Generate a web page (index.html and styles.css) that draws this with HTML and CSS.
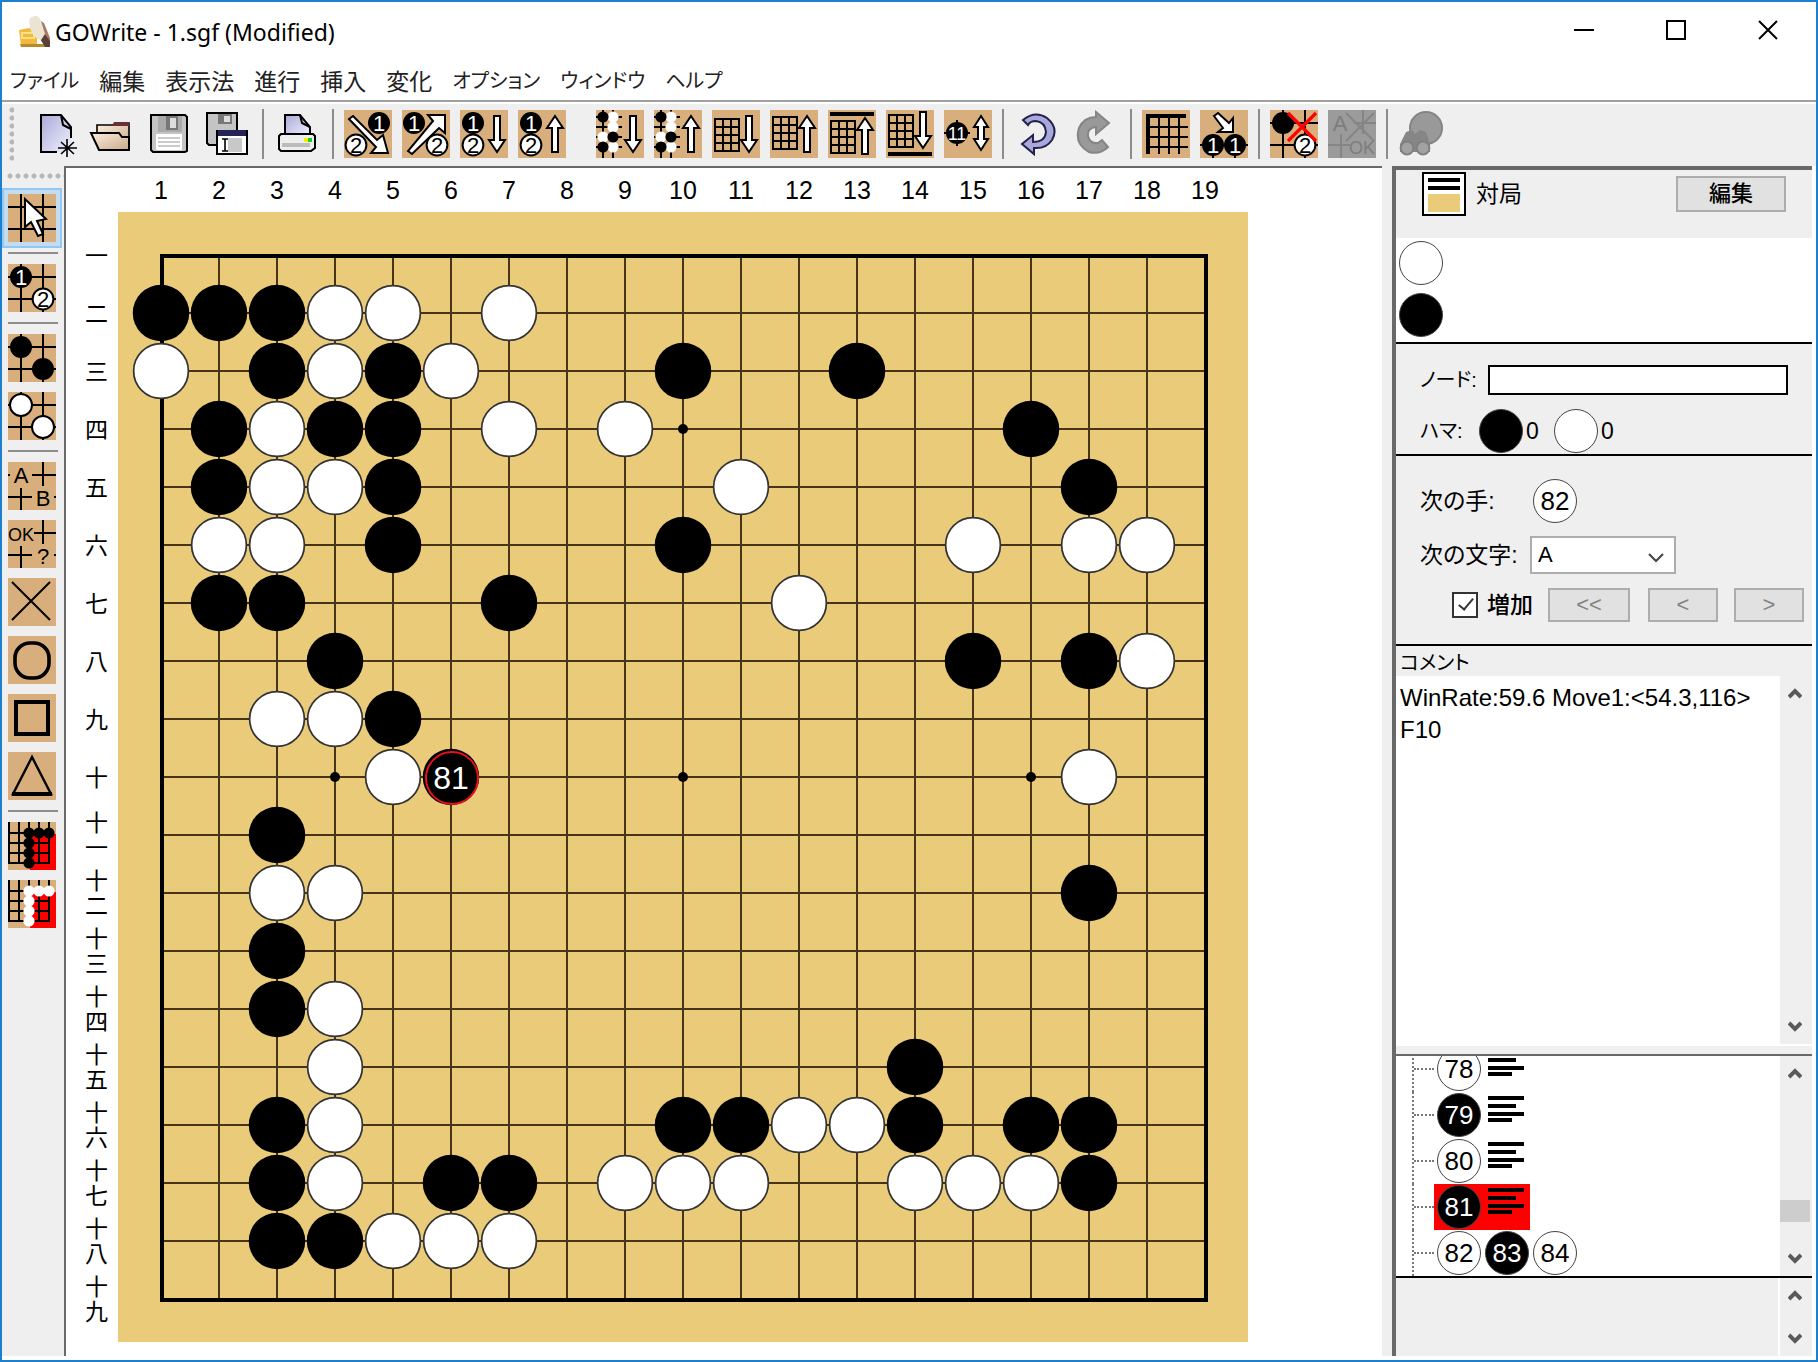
FILE: index.html
```html
<!DOCTYPE html>
<html lang="ja">
<head>
<meta charset="utf-8">
<title>GOWrite - 1.sgf (Modified)</title>
<link rel="stylesheet" href="styles.css">
</head>
<body>
<svg class="defs" width="0" height="0" aria-hidden="true">
  <defs>
    <linearGradient id="paper" x1="0" y1="0" x2="1" y2="1"><stop offset="0" stop-color="#a9a9d8"/><stop offset="1" stop-color="#f2f2ff"/></linearGradient>
    <linearGradient id="folder" x1="0" y1="0" x2="1" y2="1"><stop offset="0" stop-color="#fdeedd"/><stop offset="1" stop-color="#c9a98c"/></linearGradient>
    <g id="cross"><path d="M0 6.5h24M0 17.5h24M6.5 0v24M17.5 0v24" stroke="#000" fill="none"/></g>
    <g id="down"><path d="M17 3h3v12h2.500l-4 6-4-6h2.500z" fill="#fff" stroke="#000"/></g>
    <g id="up"><path d="M17 21h3V9h2.500l-4-6-4 6h2.500z" fill="#fff" stroke="#000"/></g>
    <g id="grid"><path d="M.5 .5h12v16h-12zM4.500 .5v16M8.500 .5v16M.5 4.500h12M.5 8.500h12M.5 12.500h12" fill="none" stroke="#000"/></g>
    <g id="one"><circle r="5.500"/><text y="4" fill="#fff" class="glyph">1</text></g>
    <g id="two"><circle r="5.200" fill="#fff" stroke="#000"/><text y="4" class="glyph">2</text></g>
    <g id="pattern"><path d="M3.500 0v24M8.500 0v24M0 3.500h13M0 8.500h13M0 13.500h13M0 18.500h13" stroke="#000"/><g fill="#fff"><circle cx="8.500" cy="3.500" r="2.800"/><circle cx="8.500" cy="8.500" r="2.800"/><circle cx="3.500" cy="13.500" r="2.800"/><circle cx="8.500" cy="18.500" r="2.800"/></g><circle cx="3.500" cy="3.500" r="2.800"/><circle cx="8.500" cy="13.500" r="2.800"/><circle cx="3.500" cy="18.500" r="2.800"/></g>
    <circle id="b" r=".487"/>
    <circle id="w" r=".472" fill="#fff" stroke="#333" stroke-width=".03"/>
    <g id="lines"><path d="M0 2h36M0 10h28M0 18h36M0 24h24" stroke="#000" stroke-width="4"/></g>
  </defs>
</svg>

<div class="window">
  <header class="titlebar">
    <svg class="logo" viewBox="0 0 32 32"><path d="M1 14l10-2 8 3v15H3z" fill="#f3b93c"/><path d="M4 17h12v5H4z" fill="none" stroke="#fbe08a" stroke-width="2"/><path d="M2 28h24l2 3H3z" fill="#b98a2c"/><path d="M21 4l5 3 6 15v9h-4L17 17l6-2z" fill="#a87a66"/><path d="M26 17l6 8v6h-5l-4-7z" fill="#5b4035"/><path d="M12 2q8-5 11 3l4 13-4 6-4-1-5-6q-4-8-2-15z" fill="#ece4d2"/></svg>
    <h1>GOWrite - 1.sgf (Modified)</h1>
    <button class="cap" aria-label="最小化"><svg viewBox="0 0 20 20"><path d="M0 10h20" /></svg></button>
    <button class="cap" aria-label="最大化"><svg viewBox="0 0 20 20"><path d="M1 1h18v18H1z"/></svg></button>
    <button class="cap" aria-label="閉じる"><svg viewBox="0 0 20 20"><path d="M1 1l18 18M19 1L1 19"/></svg></button>
  </header>

  <nav class="menu">
    <a class="kana" href="#file">ファイル</a><a href="#edit">編集</a><a href="#view">表示法</a><a href="#go">進行</a><a href="#insert">挿入</a><a href="#var">変化</a><a class="kana" href="#opt">オプション</a><a class="kana" href="#win">ウィンドウ</a><a class="kana" href="#help">ヘルプ</a>
  </nav>

  <div class="tools">
    <span class="grip"></span>
    <button aria-label="新規"><svg viewBox="0 0 24 24"><path d="M5.500 2.500h10l5 6v12.500h-15z" fill="url(#paper)"/><path d="M20.500 14V8.500l-5-6h-10v18.500h8M15.500 2.500l1 5 4 2" fill="none" stroke="#000"/><path d="M18.500 14.500v9M14 19h9.500M15.500 16l6.500 6M22 16l-6.500 6" stroke="#000" stroke-width=".8"/></svg></button>
    <button aria-label="開く"><svg viewBox="0 0 24 24"><path d="M13 7h7v3h-8z" fill="#6b2f38"/><path d="M4.500 11v-3.500h8l2-1h6v13h-14z" fill="url(#folder)" stroke="#000" stroke-width=".8"/><path d="M13 6h7.500v2H12z" fill="#6b2f38"/><path d="M1.500 11.500h14l1.500 2h3.500v6.500h-15z" fill="url(#folder)" stroke="#000"/></svg></button>
    <button aria-label="保存"><svg viewBox="0 0 24 24"><path d="M2.500 2.500h17l1 1v17l-1 .5h-16l-1-1z" fill="#c4c4c4" stroke="#000"/><path d="M6 3h12v8H6z" fill="#aaa"/><path d="M10 3h6v7h-6z" fill="#777"/><path d="M12 4h3v5h-3z" fill="#ddd"/><path d="M5 12h13v8H5z" fill="#fff"/><path d="M6 14h11M6 16h11M6 18h11" stroke="#bbb" stroke-width=".8"/></svg></button>
    <button aria-label="すべて保存"><svg viewBox="0 0 24 24"><path d="M1.500 1.500h15v16h-14l-1-1z" fill="#c4c4c4" stroke="#000"/><path d="M7 2h7v5H7z" fill="#777"/><path d="M10 3h3v3h-3z" fill="#ddd"/><path d="M6.500 10.500h15v11.500h-15z" fill="#fff" stroke="#000"/><path d="M7 10h14v3H7z" fill="#232354"/><path d="M12 14h7v7h-7z" fill="#c8c8c8"/><path d="M9 14.500h3M10.500 14.500v6M9 20.500h3" stroke="#000" stroke-width=".8"/></svg></button>
    <i class="sep"></i>
    <button aria-label="印刷"><svg viewBox="0 0 24 24"><path d="M5.500 13V2.500h7.500l5 6V13z" fill="url(#paper)" stroke="#000"/><path d="M13 2.500l1 4 4 2" fill="none" stroke="#000"/><path d="M2.500 13l1-1h16l1 1v6l-2 1.500h-15l-1-1z" fill="#eee" stroke="#000"/><path d="M4 16.500h14v2H4z" fill="#bbb"/><path d="M15 14h2v2h-2z" fill="#ee0"/><path d="M17 14h2v2h-2z" fill="#2c2"/></svg></button>
    <i class="sep"></i>
    <button class="tile" aria-label="次の手へ"><svg viewBox="0 0 24 24"><path d="M2.500 4.500l2-1.500 12 12 3-2.500 2.500 9h-8.500l2.500-3z" fill="#fff" stroke="#000"/><use href="#one" x="17.500" y="6.500"/><use href="#two" x="6" y="17.500"/></svg></button>
    <button class="tile" aria-label="前の手へ"><svg viewBox="0 0 24 24"><path d="M3 20.500l2 1.500L18.500 9l3 2.500V2.500H13l2.500 3z" fill="#fff" stroke="#000"/><use href="#one" x="6" y="6.500"/><use href="#two" x="17.500" y="17.500"/></svg></button>
    <button class="tile" aria-label="次へ"><svg viewBox="0 0 24 24"><use href="#one" x="6.500" y="6.500"/><use href="#two" x="6.500" y="17.500"/><use href="#down"/></svg></button>
    <button class="tile" aria-label="戻る"><svg viewBox="0 0 24 24"><use href="#one" x="6.500" y="6.500"/><use href="#two" x="6.500" y="17.500"/><use href="#up"/></svg></button>
    <i class="space"></i>
    <button class="tile" aria-label="次の図"><svg viewBox="0 0 24 24"><use href="#pattern"/><use href="#down"/></svg></button>
    <button class="tile" aria-label="前の図"><svg viewBox="0 0 24 24"><use href="#pattern"/><use href="#up"/></svg></button>
    <button class="tile" aria-label="次の盤面"><svg viewBox="0 0 24 24"><use href="#grid" x="1" y="4"/><use href="#down"/></svg></button>
    <button class="tile" aria-label="前の盤面"><svg viewBox="0 0 24 24"><use href="#grid" x="1" y="3"/><use href="#up"/></svg></button>
    <button class="tile" aria-label="最初の盤面"><svg viewBox="0 0 24 24"><path d="M1 2h22" stroke="#000" stroke-width="2"/><use href="#grid" x="1" y="5"/><use href="#up" y="1"/></svg></button>
    <button class="tile" aria-label="最後の盤面"><svg viewBox="0 0 24 24"><path d="M1 22h22" stroke="#000" stroke-width="2"/><use href="#grid" x="1" y="2"/><use href="#down" y="-2"/></svg></button>
    <button class="tile" aria-label="手数"><svg viewBox="0 0 24 24"><path d="M0 11.500h13M6.500 5v13" stroke="#000"/><circle cx="6.500" cy="11.500" r="5.500"/><text x="6.500" y="15" fill="#fff" class="glyph tight">11</text><path d="M18.500 3l3.500 5.500h-2v6h2L18.500 20 15 14.500h2v-6h-2z" fill="#fff" stroke="#000"/></svg></button>
    <i class="sep"></i>
    <button aria-label="元に戻す"><svg viewBox="0 0 24 24"><path d="M4.500 5q6-5 12-1 6 5 2.500 11-3 4.500-9 4v3L4 17l5.500-4.500V16q6 0 6.500-5-.5-5-5-5.500-3 0-4 2z" fill="#a8a8dc" stroke="#22224a"/></svg></button>
    <button aria-label="やり直し" disabled><svg viewBox="0 0 24 24"><path d="M18 18.500q-4 4-9.500 2.500Q1 17 3.500 9 6 3.500 12 3.500V1L18.500 6.500 12 12V8.500Q7.500 9 8 13q1 4 5 3.500l2-1.500z" fill="#999" stroke="#858585"/></svg></button>
    <i class="sep"></i>
    <button class="tile" aria-label="盤の範囲"><svg viewBox="0 0 24 24"><path d="M3 22V3h19" fill="none" stroke="#000" stroke-width="2"/><path d="M8.500 3v19M13.500 3v19M18.500 3v19M3 8.500h20M3 13.500h20M3 18.500h20" stroke="#000"/></svg></button>
    <button class="tile" aria-label="番号を振り直す"><svg viewBox="0 0 24 24"><path d="M7 3l2-1.500 5.500 5 2-2.500v7H9l2.500-2z" fill="#fff" stroke="#000"/><path d="M0 17.500h24M6.500 12v12M17.500 12v12" stroke="#000"/><use href="#one" x="6.500" y="17.500"/><use href="#one" x="17.500" y="17.500"/></svg></button>
    <i class="sep"></i>
    <button class="tile" aria-label="石を消す"><svg viewBox="0 0 24 24"><use href="#cross"/><circle cx="6.500" cy="6.500" r="5.500"/><use href="#two" x="17.500" y="17.500"/><path d="M9 1.500l14 14M23 1.500l-14 14" stroke="#f00" stroke-width="1.600"/></svg></button>
    <button class="tile off" aria-label="マークを消す" disabled><svg viewBox="0 0 24 24"><path d="M0 17.500h11M6.500 12v12M17.500 0v12M13 6.500h11M9 1.500l14 14M23 1.500l-14 14" stroke="#858585"/><text x="6" y="10.500" fill="#7d7d7d" class="glyph">A</text><text x="17" y="22" fill="#7d7d7d" class="glyph tight">OK</text></svg></button>
    <i class="sep"></i>
    <button aria-label="検索" disabled><svg viewBox="0 0 24 24"><circle cx="14" cy="9" r="8" fill="#999" stroke="#858585"/><path d="M1 17l3-6 3-1 1.500 2L11 10l3 1 2 6v4H1z" fill="#868686"/><circle cx="4.500" cy="19" r="3.200" fill="#a2a2a2" stroke="#808080"/><circle cx="12.500" cy="19" r="3.200" fill="#a2a2a2" stroke="#808080"/></svg></button>
  </div>

  <main class="work">
    <div class="palette">
      <span class="grip"></span>
      <button class="tile on" aria-label="選択"><svg viewBox="0 0 24 24"><use href="#cross"/><path d="M8.500 2.500v14l3-2.500 3.500 7 2.500-1-3-6.500 4.500-1z" fill="#fff" stroke="#000"/></svg></button>
      <i class="sep"></i>
      <button class="tile" aria-label="着手"><svg viewBox="0 0 24 24"><use href="#cross"/><use href="#one" x="6.500" y="6.500"/><use href="#two" x="17.500" y="17.500"/></svg></button>
      <i class="sep"></i>
      <button class="tile" aria-label="黒石"><svg viewBox="0 0 24 24"><use href="#cross"/><circle cx="6.500" cy="6.500" r="5.500"/><circle cx="17.500" cy="17.500" r="5.500"/></svg></button>
      <button class="tile" aria-label="白石"><svg viewBox="0 0 24 24"><use href="#cross"/><g fill="#fff" stroke="#000"><circle cx="6.500" cy="6.500" r="5.500"/><circle cx="17.500" cy="17.500" r="5.500"/></g></svg></button>
      <i class="sep"></i>
      <button class="tile" aria-label="文字"><svg viewBox="0 0 24 24"><path d="M12 6.500h12M17.500 0v12M0 17.500h12M6.500 13v11M0 6.500h1M23 17.500h1" stroke="#000"/><text x="6.500" y="10.500" class="glyph">A</text><text x="17.500" y="22" class="glyph">B</text></svg></button>
      <button class="tile" aria-label="注記"><svg viewBox="0 0 24 24"><path d="M13 6.500h11M17.500 0v12M0 17.500h12M6.500 13v11M23 17.500h1" stroke="#000"/><text x="6.500" y="10.500" class="glyph tight">OK</text><text x="17.500" y="22" class="glyph">?</text></svg></button>
      <button class="tile" aria-label="バツ印"><svg viewBox="0 0 24 24"><path d="M2 2l19 19M21 2L2 21" stroke="#000"/></svg></button>
      <button class="tile" aria-label="丸印"><svg viewBox="0 0 24 24"><rect x="3.500" y="3.500" width="17" height="17.500" rx="7.500" fill="none" stroke="#000" stroke-width="1.800"/></svg></button>
      <button class="tile" aria-label="四角印"><svg viewBox="0 0 24 24"><path d="M4 4h16v16H4z" fill="none" stroke="#000" stroke-width="2"/></svg></button>
      <button class="tile" aria-label="三角印"><svg viewBox="0 0 24 24"><path d="M12 2.500L2.500 21h19z" fill="none" stroke="#000" stroke-width="1.200"/><path d="M2 21h20" stroke="#000" stroke-width="2"/></svg></button>
      <i class="sep"></i>
      <button class="tile" aria-label="黒地"><svg viewBox="0 0 24 24"><path d="M11 6h13v18H11z" fill="#f00"/><path d="M.5 0v21M5.500 0v21M10.500 0v21M15.500 0v21M20.500 0v21M0 5.500h21M0 10.500h21M0 15.500h21M0 20.500h21" stroke="#000"/><g><circle cx="10.500" cy="5.500" r="2.800"/><circle cx="15.500" cy="5.500" r="2.800"/><circle cx="20.500" cy="5.500" r="2.800"/><circle cx="10.500" cy="10.500" r="2.800"/><circle cx="10.500" cy="15.500" r="2.800"/><circle cx="10.500" cy="20.500" r="2.800"/></g></svg></button>
      <button class="tile" aria-label="白地"><svg viewBox="0 0 24 24"><path d="M11 6h13v18H11z" fill="#f00"/><path d="M.5 0v21M5.500 0v21M10.500 0v21M15.500 0v21M20.500 0v21M0 5.500h21M0 10.500h21M0 15.500h21M0 20.500h21" stroke="#000"/><g fill="#fff"><circle cx="10.500" cy="5.500" r="2.800"/><circle cx="15.500" cy="5.500" r="2.800"/><circle cx="20.500" cy="5.500" r="2.800"/><circle cx="10.500" cy="10.500" r="2.800"/><circle cx="10.500" cy="15.500" r="2.800"/><circle cx="10.500" cy="20.500" r="2.800"/></g></svg></button>
    </div>

    <section class="canvas">
      <ol class="cols"><li>1</li><li>2</li><li>3</li><li>4</li><li>5</li><li>6</li><li>7</li><li>8</li><li>9</li><li>10</li><li>11</li><li>12</li><li>13</li><li>14</li><li>15</li><li>16</li><li>17</li><li>18</li><li>19</li></ol>
      <ol class="rows"><li>一</li><li>二</li><li>三</li><li>四</li><li>五</li><li>六</li><li>七</li><li>八</li><li>九</li><li>十</li><li>十一</li><li>十二</li><li>十三</li><li>十四</li><li>十五</li><li>十六</li><li>十七</li><li>十八</li><li>十九</li></ol>
      <svg class="board" viewBox="0 0 1130 1130" role="img" aria-label="碁盤">
        <path class="thin" d="M101 44v1044M159 44v1044M217 44v1044M275 44v1044M333 44v1044M391 44v1044M449 44v1044M507 44v1044M565 44v1044M623 44v1044M681 44v1044M739 44v1044M797 44v1044M855 44v1044M913 44v1044M971 44v1044M1029 44v1044M44 101h1044M44 159h1044M44 217h1044M44 275h1044M44 333h1044M44 391h1044M44 449h1044M44 507h1044M44 565h1044M44 623h1044M44 681h1044M44 739h1044M44 797h1044M44 855h1044M44 913h1044M44 971h1044M44 1029h1044"/>
        <path class="edge" d="M44 44h1044v1044H44z"/>
        <circle cx="565" cy="217" r="5"/><circle cx="217" cy="565" r="5"/><circle cx="565" cy="565" r="5"/><circle cx="913" cy="565" r="5"/>
        <g transform="translate(43 43) scale(58)">
          <use href="#b" x="0" y="1"/><use href="#b" x="1" y="1"/><use href="#b" x="2" y="1"/><use href="#w" x="3" y="1"/><use href="#w" x="4" y="1"/><use href="#w" x="6" y="1"/>
          <use href="#w" x="0" y="2"/><use href="#b" x="2" y="2"/><use href="#w" x="3" y="2"/><use href="#b" x="4" y="2"/><use href="#w" x="5" y="2"/><use href="#b" x="9" y="2"/><use href="#b" x="12" y="2"/>
          <use href="#b" x="1" y="3"/><use href="#w" x="2" y="3"/><use href="#b" x="3" y="3"/><use href="#b" x="4" y="3"/><use href="#w" x="6" y="3"/><use href="#w" x="8" y="3"/><use href="#b" x="15" y="3"/>
          <use href="#b" x="1" y="4"/><use href="#w" x="2" y="4"/><use href="#w" x="3" y="4"/><use href="#b" x="4" y="4"/><use href="#w" x="10" y="4"/><use href="#b" x="16" y="4"/>
          <use href="#w" x="1" y="5"/><use href="#w" x="2" y="5"/><use href="#b" x="4" y="5"/><use href="#b" x="9" y="5"/><use href="#w" x="14" y="5"/><use href="#w" x="16" y="5"/><use href="#w" x="17" y="5"/>
          <use href="#b" x="1" y="6"/><use href="#b" x="2" y="6"/><use href="#b" x="6" y="6"/><use href="#w" x="11" y="6"/>
          <use href="#b" x="3" y="7"/><use href="#b" x="14" y="7"/><use href="#b" x="16" y="7"/><use href="#w" x="17" y="7"/>
          <use href="#w" x="2" y="8"/><use href="#w" x="3" y="8"/><use href="#b" x="4" y="8"/>
          <use href="#w" x="4" y="9"/><use href="#b" x="5" y="9"/><use href="#w" x="16" y="9"/>
          <use href="#b" x="2" y="10"/>
          <use href="#w" x="2" y="11"/><use href="#w" x="3" y="11"/><use href="#b" x="16" y="11"/>
          <use href="#b" x="2" y="12"/>
          <use href="#b" x="2" y="13"/><use href="#w" x="3" y="13"/>
          <use href="#w" x="3" y="14"/><use href="#b" x="13" y="14"/>
          <use href="#b" x="2" y="15"/><use href="#w" x="3" y="15"/><use href="#b" x="9" y="15"/><use href="#b" x="10" y="15"/><use href="#w" x="11" y="15"/><use href="#w" x="12" y="15"/><use href="#b" x="13" y="15"/><use href="#b" x="15" y="15"/><use href="#b" x="16" y="15"/>
          <use href="#b" x="2" y="16"/><use href="#w" x="3" y="16"/><use href="#b" x="5" y="16"/><use href="#b" x="6" y="16"/><use href="#w" x="8" y="16"/><use href="#w" x="9" y="16"/><use href="#w" x="10" y="16"/><use href="#w" x="13" y="16"/><use href="#w" x="14" y="16"/><use href="#w" x="15" y="16"/><use href="#b" x="16" y="16"/>
          <use href="#b" x="2" y="17"/><use href="#b" x="3" y="17"/><use href="#w" x="4" y="17"/><use href="#w" x="5" y="17"/><use href="#w" x="6" y="17"/>
        </g>
        <circle class="last" cx="334" cy="566" r="26"/>
        <text class="last-no" x="333" y="577">81</text>
      </svg>
    </section>

    <aside class="side">
      <div class="game">
        <svg class="info" viewBox="0 0 44 44"><path d="M1 1h42v42H1z" fill="#fff" stroke="#000" stroke-width="2"/><path d="M6 8h32M6 16h32" stroke="#000" stroke-width="4"/><path d="M6 22h32v18H6z" fill="#e9cb7a"/></svg>
        <span>対局</span>
        <button class="btn strong">編集</button>
      </div>
      <div class="players"><span class="stone"></span><span class="stone black"></span></div>
      <div class="node">
        <div class="line"><label class="kana" for="node">ノード:</label><input id="node" type="text"></div>
        <div class="line"><span class="cap-label kana">ハマ:</span><span class="stone black"></span><span class="num">0</span><span class="stone"></span><span class="num">0</span></div>
      </div>
      <div class="next">
        <div class="line"><span class="next-label">次の手:</span><span class="stone">82</span></div>
        <div class="line"><label for="letter">次の文字:</label><span class="drop"><select id="letter"><option>A</option></select><svg viewBox="0 0 16 10"><path d="M1 1l7 7 7-7"/></svg></span></div>
        <div class="line steps"><input id="inc" type="checkbox" checked><label for="inc">増加</label><button class="btn wide" disabled>&lt;&lt;</button><button class="btn" disabled>&lt;</button><button class="btn" disabled>&gt;</button></div>
      </div>
      <label class="comment-label kana" for="comment">コメント</label>
      <div class="pane comment"><textarea id="comment">WinRate:59.6 Move1:&lt;54.3,116&gt;
F10</textarea><div class="bar"><svg viewBox="0 0 14 12"><path d="M1 9l6-6 6 6"/></svg><svg viewBox="0 0 14 12"><path d="M1 3l6 6 6-6"/></svg></div></div>
      <div class="pane tree">
        <ul>
          <li><span class="row"><span class="stone">78</span><svg viewBox="0 0 36 26"><use href="#lines"/></svg></span></li>
          <li><span class="row"><span class="stone black">79</span><svg viewBox="0 0 36 26"><use href="#lines"/></svg></span></li>
          <li><span class="row"><span class="stone">80</span><svg viewBox="0 0 36 26"><use href="#lines"/></svg></span></li>
          <li><span class="row current"><span class="stone black">81</span><svg viewBox="0 0 36 26"><use href="#lines"/></svg></span></li>
          <li><span class="row"><span class="stone">82</span><span class="stone black">83</span><span class="stone">84</span></span></li>
        </ul>
        <div class="bar"><svg viewBox="0 0 14 12"><path d="M1 9l6-6 6 6"/></svg><i class="thumb"></i><svg viewBox="0 0 14 12"><path d="M1 3l6 6 6-6"/></svg></div>
      </div>
      <div class="pane foot"><div></div><div class="bar"><svg viewBox="0 0 14 12"><path d="M1 9l6-6 6 6"/></svg><svg viewBox="0 0 14 12"><path d="M1 3l6 6 6-6"/></svg></div></div>
    </aside>
  </main>
</div>
</body>
</html>
```
FILE: styles.css
```css
* { box-sizing: border-box; }
body { margin: 0; background: #fff; color: #000; font: 24px/32px "Liberation Sans", "Noto Sans CJK JP", sans-serif; }
ol, ul { list-style: none; margin: 0; padding: 0; }
button, input, select, textarea { font: inherit; color: inherit; border-radius: 0; }
button { padding: 0; border: 0; background: none; }
svg { display: block; }
.defs { position: absolute; }

.window { min-height: 100vh; display: flex; flex-direction: column; border: 2px solid #1c80d0; }

.titlebar { display: flex; align-items: center; height: 60px; padding: 0 2px 0 16px; }
.logo { width: 32px; height: 32px; }
.titlebar h1 { flex: 1; margin: 0 0 0 5px; font: 400 23px/32px "Noto Sans", sans-serif; }
.cap { display: grid; place-items: center; width: 92px; height: 56px; margin-bottom: 4px; }
.cap svg { width: 20px; height: 20px; fill: none; stroke: #000; stroke-width: 2; }

.menu { display: flex; gap: 20px; height: 40px; padding: 1px 8px 0; border-bottom: 2px solid #a0a0a0; }
.menu a { color: #222; text-decoration: none; font: 23px/34px "Noto Sans CJK JP", sans-serif; font-feature-settings: "palt"; }
.menu .kana, .side .kana { font-size: 20px; }

.tools { display: flex; align-items: center; gap: 10px; height: 64px; padding: 0 0 2px 6px; background: #efefef; border-top: 2px solid #fff; }
.tools button, .palette button { width: 48px; height: 48px; flex: none; }
.tools .grip { width: 6px; height: 56px; margin-right: 6px; background: radial-gradient(circle at 4px 4px, #b4b8bc 2px, transparent 3px) 0 0 / 8px 8px; }
.tools .sep { width: 2px; height: 50px; background: #8c8c8c; }
.tools .space { width: 10px; }
.tile { background: #d8af7c; }
.tile.off { background: #9b9b9b; }
.tile.on { outline: 4px solid #c4dcf0; box-shadow: 0 0 0 6px #90c8f6; }
.glyph { font: 11px "Liberation Sans Narrow", "Liberation Sans", sans-serif; text-anchor: middle; }
.tight { font-size: 9px; }

.work { flex: 1; display: flex; align-items: stretch; padding-bottom: 4px; background: linear-gradient(#efefef, #efefef) no-repeat 0 0 / 100% calc(100% - 4px); }

.palette { flex: none; width: 62px; padding: 6px 4px 0; display: flex; flex-direction: column; align-items: flex-start; gap: 10px; }
.palette .grip { width: 58px; height: 8px; margin-bottom: 4px; background: radial-gradient(circle at 4px 4px, #b4b8bc 2px, transparent 3px) 0 0 / 8px 8px; }
.palette .tile, .palette .sep { margin-left: 2px; }
.palette .sep { width: 50px; height: 2px; background: #8c8c8c; }

.canvas { flex: 1; display: grid; grid-template: 44px 1130px / 52px 1130px; padding-bottom: 14px; background: #fff; border-left: 2px solid #696969; border-top: 2px solid #696969; }
.cols { grid-column: 2; display: flex; padding-left: 14px; font-size: 25px; line-height: 44px; }
.cols li { width: 58px; flex: none; text-align: center; }
.rows { padding: 13px 0 0 10px; font: 23px/25px "Noto Sans CJK JP", sans-serif; }
.rows li { width: 42px; height: 58px; padding: 0 9px; display: flex; align-items: center; word-break: break-all; }
.board { width: 1130px; height: 1130px; background: #e9cb7a; }
.thin { stroke: #483418; stroke-width: 2; }
.edge { fill: none; stroke: #000; stroke-width: 4; }
.last { fill: none; stroke: #e8101c; stroke-width: 2; }
.last-no { fill: #fff; font: 32px "Liberation Sans", sans-serif; text-anchor: middle; }

.side { flex: none; width: 420px; margin: 0 4px 0 10px; border-left: 4px solid #696969; border-top: 4px solid #696969; display: flex; flex-direction: column; background: #efefef; font-feature-settings: "palt"; box-shadow: 4px 0 #fff; }
.line { display: flex; align-items: center; }
.btn { height: 34px; width: 70px; border: 2px solid #adadad; background: #e1e1e1; font-size: 22px; line-height: 28px; }
.btn:disabled { color: #838383; }
.strong { font-weight: 500; }
.stone { flex: none; display: grid; place-items: center; width: 44px; height: 44px; border: 1px solid #444; border-radius: 50%; background: #fff; font-size: 26px; line-height: 42px; }
.stone.black { background: #000; color: #fff; }
.game { display: flex; height: 68px; padding: 2px 26px 0; }
.info { width: 44px; height: 44px; }
.game span { flex: 1; padding: 6px 10px; font-size: 23px; }
.game .btn { width: 110px; height: 36px; margin-top: 4px; font-size: 22px; }
.players { height: 106px; padding: 3px; display: flex; flex-direction: column; gap: 8px; background: #fff; border-bottom: 2px solid #000; }
.node { height: 112px; padding: 16px 24px 0; border-bottom: 2px solid #000; }
.node .line { height: 40px; }
.node .line + .line { height: 54px; padding-top: 8px; }
.node label { width: 68px; white-space: nowrap; }
.node input { flex: 1; min-width: 0; height: 30px; padding: 0 4px; border: 2px solid #000; background: #fff; }
.cap-label { width: 59px; }
.num { width: 31px; padding-left: 3px; font-size: 23px; }
.next { height: 190px; padding: 18px 8px 0 24px; border-bottom: 2px solid #000; }
.next .line { height: 54px; font-size: 23px; }
.next-label { width: 113px; }
.next .line label { width: 110px; }
.drop { position: relative; width: 146px; height: 38px; }
.drop select { width: 100%; height: 100%; padding: 0 6px; appearance: none; border: 2px solid #adadad; background: #fff; font-size: 22px; }
.drop svg { position: absolute; right: 12px; top: 17px; width: 16px; height: 10px; fill: none; stroke: #444; stroke-width: 2; pointer-events: none; }
.next .steps { height: 46px; gap: 9px; padding-left: 32px; }
.steps input { appearance: none; width: 26px; height: 26px; margin: 0; border: 2px solid #333; background: #fff; position: relative; }
.steps input:checked::after { content: ""; position: absolute; left: 8px; top: 1px; width: 6px; height: 13px; border: solid #333; border-width: 0 2px 2px 0; transform: rotate(40deg); }
.next .steps label { width: 52px; font-weight: 500; }
.steps .wide { width: 82px; margin-right: 9px; }
.steps .btn + .btn + .btn { margin-left: 7px; }
.comment-label { height: 30px; padding-left: 4px; line-height: 34px; }

.pane { display: flex; }
.bar { flex: none; width: 32px; padding: 12px 10px 12px 8px; display: flex; flex-direction: column; justify-content: space-between; background: #efefef; }
.bar svg { width: 14px; height: 12px; fill: none; stroke: #5a5a5a; stroke-width: 4; }
.comment { flex: 1; min-height: 200px; border-bottom: 2px solid #fff; }
.comment textarea { flex: 1; min-width: 0; padding: 6px 4px; border: 0; resize: none; background: #fff; line-height: 32px; overflow: hidden; }
.tree { height: 224px; margin-top: 8px; border-top: 2px solid #696969; border-bottom: 2px solid #000; background: #fff; overflow: hidden; }
.tree ul { flex: 1; margin: -10px 0 0 16px; }
.tree li { height: 46px; display: flex; align-items: center; border-left: 2px dotted #777; }
.tree li::before { content: ""; width: 20px; border-top: 2px dotted #777; }
.row { display: flex; align-items: flex-start; gap: 4px; height: 46px; padding: 1px 6px 0 3px; }
.row svg { width: 36px; height: 26px; margin: 3px 0 0 3px; }
.row.current { background: #f00; }
.thumb { height: 22px; width: 30px; margin: auto 0 30px -8px; background: #cdcdcd; }
.foot { height: 78px; }
.foot div:first-child { flex: 1; border-right: 2px solid #fff; }
```
